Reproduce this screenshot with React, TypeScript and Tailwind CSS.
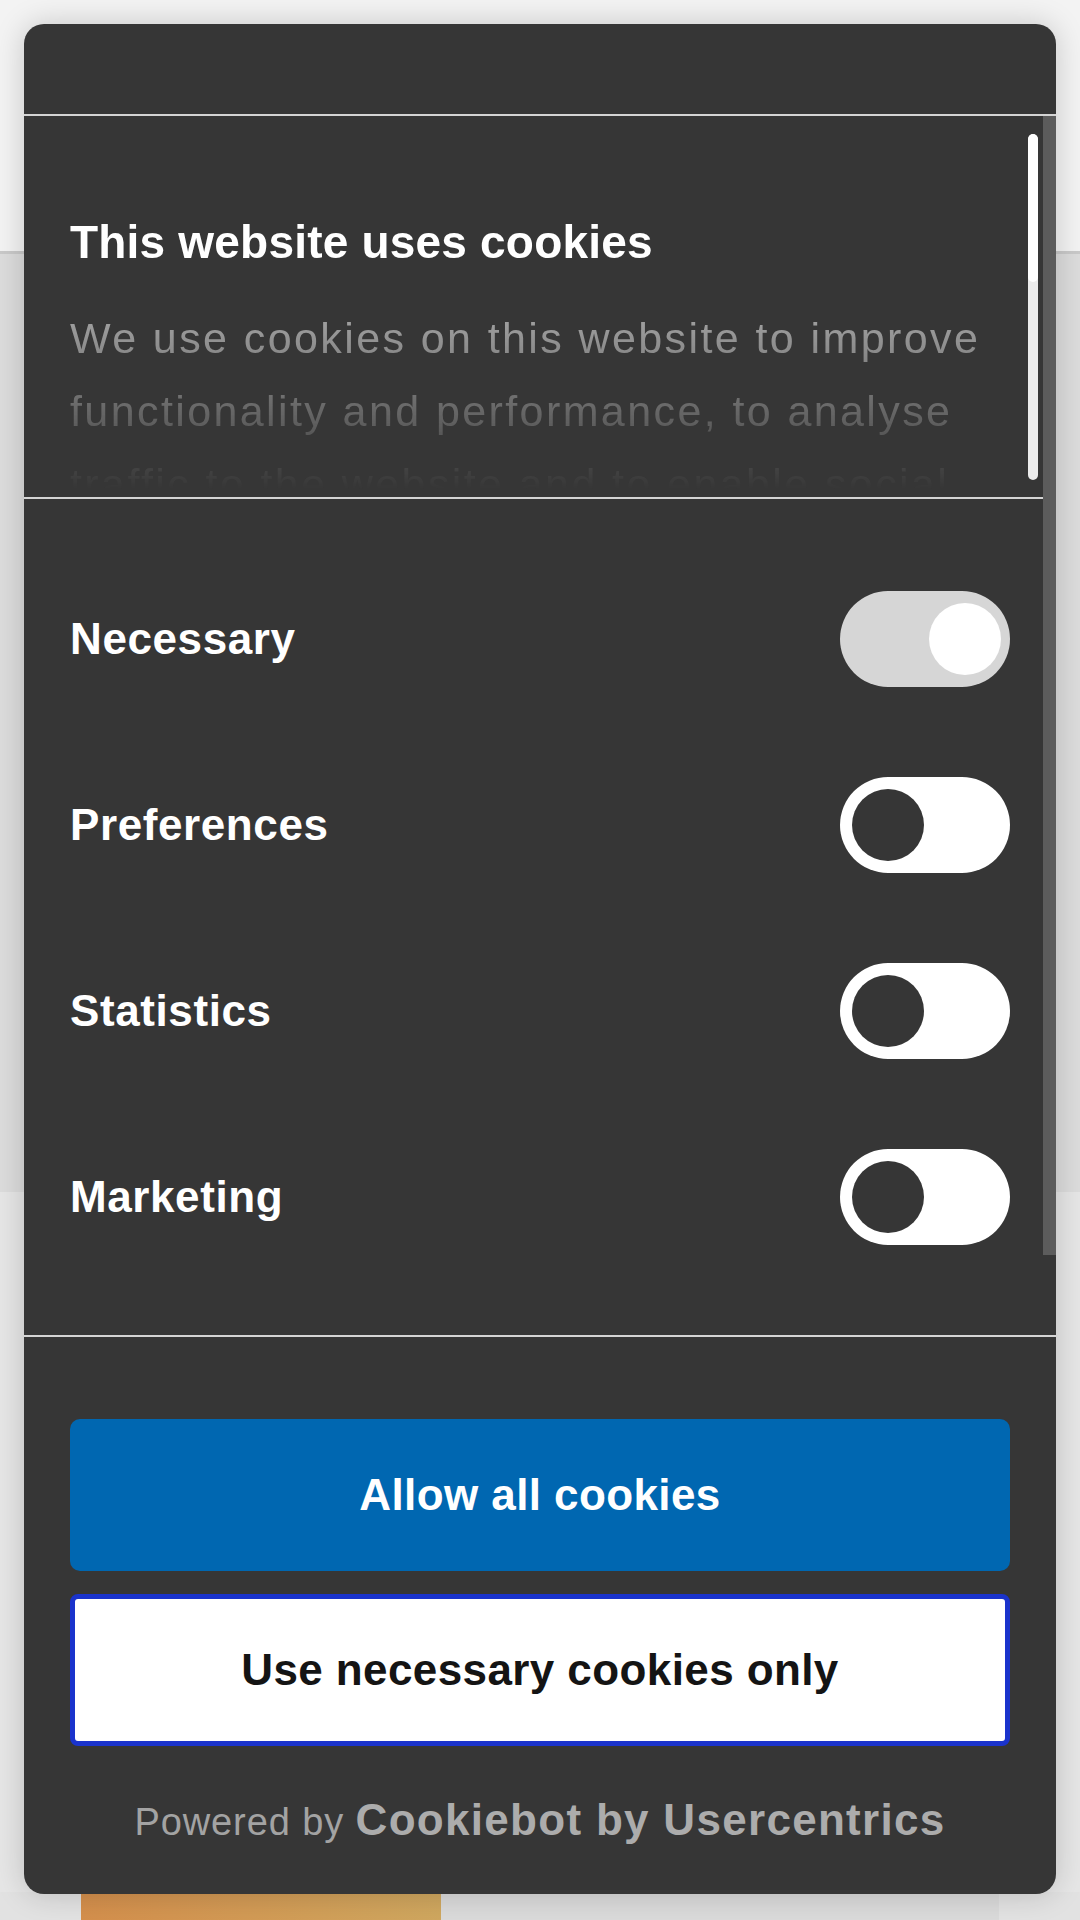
import { useState } from 'react';

type Category = {
    id: string;
    label: string;
    locked: boolean;
}

const categories: Category[] = [
    { id: 'necessary', label: 'Necessary', locked: true },
    { id: 'preferences', label: 'Preferences', locked: false },
    { id: 'statistics', label: 'Statistics', locked: false },
    { id: 'marketing', label: 'Marketing', locked: false },
];

function Toggle({ on, locked, onChange }: { on: boolean, locked: boolean, onChange: () => void }) {
    if (locked) {
        return (
            <div className="flex h-[96px] w-[170px] items-center justify-end rounded-full bg-[#d6d6d6] pr-[9px]">
                <div className="h-[72px] w-[72px] rounded-full bg-white" />
            </div>
        );
    }
    return (
        <button
            onClick={onChange}
            className={`flex h-[96px] w-[170px] items-center rounded-full px-[12px] ${on ? 'justify-end bg-[#0067b1]' : 'justify-start bg-white'}`}
        >
            <div className={`h-[72px] w-[72px] rounded-full ${on ? 'bg-white' : 'bg-[#363636]'}`} />
        </button>
    );
}

export default function App() {
    const [enabled, setEnabled] = useState<Record<string, boolean>>({
        necessary: true,
        preferences: false,
        statistics: false,
        marketing: false,
    });

    const flip = (id: string) => setEnabled((prev) => ({ ...prev, [id]: !prev[id] }));

    return (
        <div className="relative h-[1920px] w-[1080px] overflow-hidden bg-[#e2e2e2] font-['Liberation_Sans',Arial,sans-serif]">
            {/* page behind the dialog */}
            <div className="h-[254px] border-b-[3px] border-[#c9c9c9] bg-[#f3f3f3]" />
            <div className="h-[938px] bg-[#dcdcdc]" />
            <div className="h-[700px] bg-[#e6e6e6]" />
            <div className="flex h-[28px]">
                <div className="ml-[81px] w-[360px] bg-gradient-to-r from-[#d48f4c] to-[#cfa75f]" />
                <div className="w-[558px] bg-[#dadada]" />
            </div>

            {/* cookie dialog */}
            <div className="absolute left-6 top-6 flex w-[1032px] flex-col overflow-hidden rounded-[20px] bg-[#363636] shadow-[0_0_30px_rgba(0,0,0,0.18)]">
                <div className="h-[90px]" />
                <div className="h-[2px] bg-[#d4d4d4]" />

                <div className="flex">
                    <div className="flex flex-1 flex-col">
                        <div className="flex h-[381px]">
                            <div className="flex-1 overflow-hidden pl-[46px] pr-[18px] pt-[99px] [mask-image:linear-gradient(to_bottom,black_38%,transparent_98%)]">
                                <h2 className="text-[46px] font-bold leading-[55px] tracking-[0.2px] text-white">This website uses cookies</h2>
                                <p className="mt-[32px] text-[43px] leading-[73px] tracking-[2.4px] text-[#c4c4c4]">
                                    We use cookies on this website to improve functionality and performance, to analyse traffic to the website and to enable social media features.
                                </p>
                            </div>
                            <div className="mb-[17px] mr-[5px] mt-[18px] flex w-[10px] flex-col overflow-hidden rounded-full bg-[#ececec]">
                                <div className="h-[148px] rounded-full bg-white" />
                            </div>
                        </div>
                        <div className="h-[2px] bg-[#d4d4d4]" />

                        <div className="flex flex-col pb-[45px] pl-[46px] pr-[33px] pt-[47px]">
                            {categories.map((cat) => (
                                <div key={cat.id} className="flex h-[186px] items-center justify-between">
                                    <span className="text-[44px] font-bold tracking-[0.6px] text-white">{cat.label}</span>
                                    <Toggle on={enabled[cat.id]} locked={cat.locked} onChange={() => flip(cat.id)} />
                                </div>
                            ))}
                        </div>
                    </div>
                    <div className="w-[13px]">
                        <div className="h-[1139px] bg-[#5c5c5c]" />
                    </div>
                </div>

                <div className="h-[2px] bg-[#d4d4d4]" />

                <div className="flex flex-col px-[46px] pt-[82px]">
                    <button className="h-[152px] rounded-[10px] bg-[#0067b1] text-[44px] font-bold tracking-[0.4px] text-white">
                        Allow all cookies
                    </button>
                    <button className="mt-[23px] h-[152px] rounded-[8px] border-[5px] border-[#1a33cc] bg-white text-[44px] font-bold tracking-[0.4px] text-[#141414]">
                        Use necessary cookies only
                    </button>
                    <div className="my-[44px] flex h-[60px] items-baseline justify-center leading-[60px]">
                        <span className="text-[38px] tracking-[0.9px] text-[#a3a3a3]">Powered by&nbsp;</span>
                        <span className="text-[44px] font-bold tracking-[1.3px] text-[#acacac]">Cookiebot by Usercentrics</span>
                    </div>
                </div>
            </div>
        </div>
    );
}
